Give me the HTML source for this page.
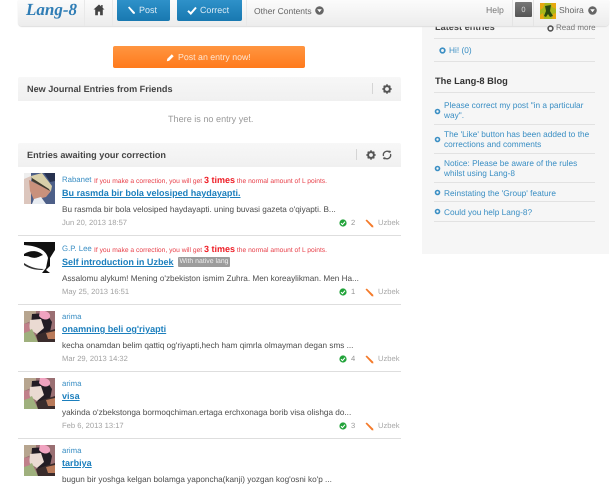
<!DOCTYPE html>
<html><head><meta charset="utf-8">
<style>
html,body{margin:0;padding:0;background:#fff;width:615px;height:486px;overflow:hidden;font-family:"Liberation Sans",sans-serif;text-rendering:geometricPrecision}
#w{position:absolute;left:0;top:0;width:615px;height:486px;overflow:hidden;filter:blur(.3px)}
.a{position:absolute;white-space:nowrap;line-height:12px}
.box{position:absolute}
.sep{position:absolute;height:1px;background:#e2e2e2}
.name{color:#3b8fc4;font-size:7.8px;left:62px;margin-top:1px}
.note{color:#e8404a;font-size:6.7px;left:94px;margin-top:1px}
.times{color:#ee1c25;font-weight:bold;font-size:9px}
.title{color:#1c7fbd;font-weight:bold;font-size:9.05px;left:62px;text-decoration:underline;margin-top:1px}
.body{color:#4c4c4c;font-size:8.2px;left:62px;margin-top:1px}
.date{color:#a3a3a3;font-size:7.6px;left:62px;margin-top:1px}
.num{color:#999;font-size:7.6px;left:351px}
.lang{color:#a8a8a8;font-size:7.6px;left:378px}
.side{color:#3b8fc4;font-size:8.3px;line-height:10px}
svg{position:absolute;display:block}
</style></head><body><div id="w">
<!-- sidebar -->
<div class="box" style="left:422px;top:0;width:187px;height:254px;background:#f6f6f6"></div>
<div class="a" style="left:435px;top:21px;color:#444;font-weight:bold;font-size:9.2px">Latest entries</div>
<!-- header -->
<div class="box" style="left:18px;top:0;width:591px;height:26px;background:linear-gradient(#fbfbfb,#ececec);border-radius:0 0 4px 4px;box-shadow:0 1px 1px #ddd"></div>
<div class="a" style="left:26px;top:1px;font:italic bold 17px/18px 'Liberation Serif',serif;color:#2f7db5">Lang-8</div>
<div class="box" style="left:84px;top:0;width:1px;height:26px;background:#e9e9e9"></div>
<div class="box" style="left:112px;top:0;width:1px;height:26px;background:#e9e9e9"></div>
<svg style="left:93px;top:4px" width="12" height="12" viewBox="0 0 12 12"><path d="M6 0.5L0.5 5.5H2.2V11.2H4.9V7.6H7.1V11.2H9.8V5.5H11.5L9.6 3.8V1H8.2V2.5Z" fill="#444"/></svg>
<div class="box" style="left:117px;top:0;width:53px;height:21px;background:linear-gradient(#2e91c9,#1878b0);border-radius:0 0 2px 2px"></div>
<svg style="left:127px;top:6px" width="9" height="9" viewBox="0 0 9 9"><path d="M1 1.5L2.3 0.5L8 6.5L7.5 8L6 7.6Z" fill="#fff"/></svg>
<div class="a" style="left:139px;top:4px;color:#dcebf5;font-size:9px">Post</div>
<div class="box" style="left:177px;top:0;width:65px;height:21px;background:linear-gradient(#2e91c9,#1878b0);border-radius:0 0 2px 2px"></div>
<svg style="left:187px;top:6px" width="10" height="9" viewBox="0 0 10 9"><path d="M1 4.8L3.8 7.5L9 1.5" fill="none" stroke="#fff" stroke-width="2"/></svg>
<div class="a" style="left:200px;top:4px;color:#dcebf5;font-size:8.9px">Correct</div>
<div class="box" style="left:246px;top:0;width:1px;height:26px;background:#e9e9e9"></div>
<div class="a" style="left:254px;top:5px;color:#666;font-size:8.5px">Other Contents</div>
<svg style="left:315px;top:6px" width="9" height="9" viewBox="0 0 9 9"><circle cx="4.5" cy="4.5" r="4.3" fill="#666"/><path d="M2.2 3.2H6.8L4.5 6.2Z" fill="#fff"/></svg>
<div class="a" style="left:486px;top:4px;color:#777;font-size:8.7px">Help</div>
<div class="box" style="left:512px;top:0;width:1px;height:26px;background:#e4e4e4"></div>
<div class="box" style="left:515px;top:2px;width:17px;height:15px;background:linear-gradient(#777,#555);border-radius:1px;color:#ddd;font-size:7.5px;line-height:15px;text-align:center">0</div>
<div class="box" style="left:533px;top:0;width:1px;height:26px;background:#e4e4e4"></div>
<svg style="left:540px;top:3px" width="16" height="16" viewBox="0 0 16 16"><rect width="16" height="16" fill="#a9b81a"/><path d="M0 0H5L3 5L0 7ZM11 0H16V6L12 4ZM0 12L3 10L4 16H0ZM13 11L16 10V16H12Z" fill="#e8a80f"/><path d="M5 3L11 2L10 8L13 13L10 14L8 11L6 14L4 13L6 8Z" fill="#2b4a10"/></svg>
<div class="a" style="left:559px;top:4px;color:#666;font-size:8.6px">Shoira</div>
<svg style="left:588px;top:6px" width="9" height="9" viewBox="0 0 9 9"><circle cx="4.5" cy="4.5" r="4.3" fill="#666"/><path d="M2.2 3.2H6.8L4.5 6.2Z" fill="#fff"/></svg>

<!-- sidebar content -->
<svg style="left:547px;top:25px" width="7" height="7" viewBox="0 0 7 7"><circle cx="3.5" cy="3.5" r="2.4" fill="none" stroke="#555" stroke-width="1.6"/></svg>
<div class="a" style="left:556px;top:22px;color:#777;font-size:8px">Read more</div>
<div class="sep" style="left:434px;top:38px;width:161px"></div>
<svg style="left:439px;top:47px" width="7" height="7" viewBox="0 0 7 7"><circle cx="3.5" cy="3.5" r="2.3" fill="none" stroke="#3b8fc4" stroke-width="1.7"/></svg>
<div class="a side" style="left:449px;top:45px">Hi! (0)</div>
<div class="sep" style="left:434px;top:61px;width:161px"></div>
<div class="a" style="left:435px;top:75px;color:#333;font-weight:bold;font-size:9.3px">The Lang-8 Blog</div>
<div class="sep" style="left:434px;top:92px;width:161px"></div>
<div class="a side" style="left:444px;top:100px">Please correct my post "in a particular<br>way".</div>
<div class="sep" style="left:434px;top:124px;width:161px"></div>
<div class="a side" style="left:444px;top:129px">The 'Like' button has been added to the<br>corrections and comments</div>
<div class="sep" style="left:434px;top:153px;width:161px"></div>
<div class="a side" style="left:444px;top:158px">Notice: Please be aware of the rules<br>whilst using Lang-8</div>
<div class="sep" style="left:434px;top:182px;width:161px"></div>
<div class="a side" style="left:444px;top:188px">Reinstating the 'Group' feature</div>
<div class="sep" style="left:434px;top:201px;width:161px"></div>
<div class="a side" style="left:444px;top:207px">Could you help Lang-8?</div>
<div class="sep" style="left:434px;top:221px;width:161px"></div>
<svg style="left:434px;top:108px" width="7" height="7" viewBox="0 0 7 7"><circle cx="3.5" cy="3.5" r="2" fill="none" stroke="#3b8fc4" stroke-width="1.6"/></svg>
<svg style="left:434px;top:136px" width="7" height="7" viewBox="0 0 7 7"><circle cx="3.5" cy="3.5" r="2" fill="none" stroke="#3b8fc4" stroke-width="1.6"/></svg>
<svg style="left:434px;top:165px" width="7" height="7" viewBox="0 0 7 7"><circle cx="3.5" cy="3.5" r="2" fill="none" stroke="#3b8fc4" stroke-width="1.6"/></svg>
<svg style="left:434px;top:189px" width="7" height="7" viewBox="0 0 7 7"><circle cx="3.5" cy="3.5" r="2" fill="none" stroke="#3b8fc4" stroke-width="1.6"/></svg>
<svg style="left:434px;top:208px" width="7" height="7" viewBox="0 0 7 7"><circle cx="3.5" cy="3.5" r="2" fill="none" stroke="#3b8fc4" stroke-width="1.6"/></svg>

<!-- CTA -->
<div class="box" style="left:113px;top:46px;width:192px;height:22px;background:linear-gradient(#ff9540,#ff7a1c);border-radius:2px"></div>
<svg style="left:166px;top:53px" width="9" height="9" viewBox="0 0 9 9"><path d="M0.8 8.2L1.3 5.8L5.8 1.3L7.7 3.2L3.2 7.7Z" fill="#fff"/></svg>
<div class="a" style="left:178px;top:51px;color:#fde6d2;font-size:8.8px">Post an entry now!</div>

<!-- friends -->
<div class="box" style="left:18px;top:77px;width:383px;height:24px;background:linear-gradient(#f7f7f7,#f0f0f0);border-radius:2px 2px 0 0"></div>
<div class="a" style="left:27px;top:83px;color:#444;font-weight:bold;font-size:9.1px">New Journal Entries from Friends</div>
<div class="box" style="left:372px;top:83px;width:1px;height:11px;background:#d5d5d5"></div>
<svg style="left:382px;top:84px" width="10" height="10" viewBox="0 0 10 10"><circle cx="5" cy="5" r="2.9" fill="none" stroke="#555" stroke-width="2"/><path d="M5 0.3V2M5 8V9.7M0.3 5H2M8 5H9.7M1.7 1.7L2.9 2.9M7.1 7.1L8.3 8.3M8.3 1.7L7.1 2.9M2.9 7.1L1.7 8.3" stroke="#555" stroke-width="1.5"/></svg>
<div class="a" style="left:168px;top:113px;color:#999;font-size:9.1px">There is no entry yet.</div>

<!-- awaiting -->
<div class="box" style="left:18px;top:143px;width:383px;height:24px;background:linear-gradient(#f7f7f7,#f0f0f0);border-radius:2px 2px 0 0"></div>
<div class="a" style="left:27px;top:149px;color:#444;font-weight:bold;font-size:9.1px">Entries awaiting your correction</div>
<div class="box" style="left:356px;top:149px;width:1px;height:11px;background:#d5d5d5"></div>
<svg style="left:366px;top:150px" width="10" height="10" viewBox="0 0 10 10"><circle cx="5" cy="5" r="2.9" fill="none" stroke="#555" stroke-width="2"/><path d="M5 0.3V2M5 8V9.7M0.3 5H2M8 5H9.7M1.7 1.7L2.9 2.9M7.1 7.1L8.3 8.3M8.3 1.7L7.1 2.9M2.9 7.1L1.7 8.3" stroke="#555" stroke-width="1.5"/></svg>
<svg style="left:382px;top:150px" width="10" height="10" viewBox="0 0 10 10"><path d="M1.5 6A3.7 3.7 0 0 1 7.5 2.2M8.5 4A3.7 3.7 0 0 1 2.5 7.8" fill="none" stroke="#555" stroke-width="1.3"/><path d="M6.5 0.5L9 1L8 3.5ZM3.5 9.5L1 9L2 6.5Z" fill="#555"/></svg>

<!-- item 1 -->
<svg style="left:24px;top:173px" width="31" height="31" viewBox="0 0 31 31"><rect width="31" height="31" fill="#4d5f88"/><rect width="7" height="31" fill="#dcc6bd"/><path d="M5 7L27 18L22 24L10 27L6 18Z" fill="#c9917c"/><path d="M7 3L18 0L28 13L27 18L8 8Z" fill="#d8cfa9"/><path d="M8 5L25 16L26 18L8 8Z" fill="#3f3a2e"/><path d="M10 26L17 24L22 31H8Z" fill="#e9edf2"/><path d="M0 0H7V3L0 6Z" fill="#eee"/><path d="M20 0H31V8L26 9Z" fill="#28324f"/></svg>
<div class="a name" style="top:173px">Rabanet</div>
<div class="a note" style="top:173px">If you make a correction, you will get <span class="times">3 times</span> the normal amount of L points.</div>
<div class="a title" style="top:186px">Bu rasmda bir bola velosiped haydayapti.</div>
<div class="a body" style="top:203px">Bu rasmda bir bola velosiped haydayapti. uning buvasi gazeta o'qiyapti. B...</div>
<div class="a date" style="top:216px">Jun 20, 2013 18:57</div>
<svg style="left:339px;top:219px" width="8" height="8" viewBox="0 0 8 8"><circle cx="4" cy="4" r="3.6" fill="#22a33a"/><path d="M2 4.2L3.5 5.6L6 2.7" fill="none" stroke="#fff" stroke-width="1.1"/></svg>
<div class="a num" style="top:217px">2</div>
<svg style="left:365px;top:219px" width="9" height="9" viewBox="0 0 9 9"><path d="M0.5 1.5L1.8 0.5L8.2 6.8L8.4 8.4L6.8 8.2Z" fill="#f47a2a"/></svg>
<div class="a lang" style="top:217px">Uzbek</div>
<div class="sep" style="left:18px;top:235px;width:383px;background:#dedede"></div>

<!-- item 2 -->
<svg style="left:24px;top:242px" width="31" height="31" viewBox="0 0 31 31"><rect width="31" height="31" fill="#fff"/><path d="M0 0H31V8L26 16V24L22 28L26 31H18L22 26L24 16C22 8 14 4 0 3Z" fill="#111"/><path d="M0 12C6 8 14 8 19 13C14 15 12 17 6 15C4 14 2 14 0 14Z" fill="#111"/><path d="M0 21C6 25 12 27 20 27L18 28C10 28 4 26 0 23Z" fill="#333"/></svg>
<div class="a name" style="top:242px">G.P. Lee</div>
<div class="a note" style="top:242px">If you make a correction, you will get <span class="times">3 times</span> the normal amount of L points.</div>
<div class="a title" style="top:255px">Self introduction in Uzbek</div>
<div class="box" style="left:178px;top:257px;width:52px;height:10px;background:#9c9c9c;border-radius:1px;color:#eee;font-size:6.9px;line-height:10px;text-align:center;white-space:nowrap">With native lang</div>
<div class="a body" style="top:272px">Assalomu alykum! Mening o'zbekiston ismim Zuhra. Men koreaylikman. Men Ha...</div>
<div class="a date" style="top:285px">May 25, 2013 16:51</div>
<svg style="left:339px;top:288px" width="8" height="8" viewBox="0 0 8 8"><circle cx="4" cy="4" r="3.6" fill="#22a33a"/><path d="M2 4.2L3.5 5.6L6 2.7" fill="none" stroke="#fff" stroke-width="1.1"/></svg>
<div class="a num" style="top:286px">1</div>
<svg style="left:365px;top:288px" width="9" height="9" viewBox="0 0 9 9"><path d="M0.5 1.5L1.8 0.5L8.2 6.8L8.4 8.4L6.8 8.2Z" fill="#f47a2a"/></svg>
<div class="a lang" style="top:286px">Uzbek</div>
<div class="sep" style="left:18px;top:304px;width:383px;background:#dedede"></div>

<!-- item 3 -->
<svg style="left:24px;top:311px" width="31" height="31" viewBox="0 0 31 31"><rect width="31" height="31" fill="#9a6f72"/><path d="M0 0H12V8L0 13Z" fill="#b7a58f"/><path d="M8 3L22 2L28 11L26 21L14 24L7 15Z" fill="#221c24"/><path d="M16 0C22 -1 27 2 26 6C24 10 18 9 15 5Z" fill="#f0a3c0"/><path d="M6 9L17 8L20 17L13 23L5 18Z" fill="#eadad2"/><path d="M0 22L8 18L14 31H0Z" fill="#9fb07d"/><path d="M12 24L31 18V31H14Z" fill="#3a2c2c"/><path d="M22 22L31 20V28L24 28Z" fill="#b97a5a"/><path d="M0 13L5 12L6 20L0 22Z" fill="#c0808a"/></svg>
<div class="a name" style="top:310px">arima</div>
<div class="a title" style="top:322px">onamning beli og'riyapti</div>
<div class="a body" style="top:339px">kecha onamdan belim qattiq og'riyapti,hech ham qimrla olmayman degan sms ...</div>
<div class="a date" style="top:352px">Mar 29, 2013 14:32</div>
<svg style="left:339px;top:355px" width="8" height="8" viewBox="0 0 8 8"><circle cx="4" cy="4" r="3.6" fill="#22a33a"/><path d="M2 4.2L3.5 5.6L6 2.7" fill="none" stroke="#fff" stroke-width="1.1"/></svg>
<div class="a num" style="top:353px">4</div>
<svg style="left:365px;top:355px" width="9" height="9" viewBox="0 0 9 9"><path d="M0.5 1.5L1.8 0.5L8.2 6.8L8.4 8.4L6.8 8.2Z" fill="#f47a2a"/></svg>
<div class="a lang" style="top:353px">Uzbek</div>
<div class="sep" style="left:18px;top:371px;width:383px;background:#dedede"></div>

<!-- item 4 -->
<svg style="left:24px;top:378px" width="31" height="31" viewBox="0 0 31 31"><rect width="31" height="31" fill="#9a6f72"/><path d="M0 0H12V8L0 13Z" fill="#b7a58f"/><path d="M8 3L22 2L28 11L26 21L14 24L7 15Z" fill="#221c24"/><path d="M16 0C22 -1 27 2 26 6C24 10 18 9 15 5Z" fill="#f0a3c0"/><path d="M6 9L17 8L20 17L13 23L5 18Z" fill="#eadad2"/><path d="M0 22L8 18L14 31H0Z" fill="#9fb07d"/><path d="M12 24L31 18V31H14Z" fill="#3a2c2c"/><path d="M22 22L31 20V28L24 28Z" fill="#b97a5a"/><path d="M0 13L5 12L6 20L0 22Z" fill="#c0808a"/></svg>
<div class="a name" style="top:377px">arima</div>
<div class="a title" style="top:389px">visa</div>
<div class="a body" style="top:406px">yakinda o'zbekstonga bormoqchiman.ertaga erchxonaga borib visa olishga do...</div>
<div class="a date" style="top:419px">Feb 6, 2013 13:17</div>
<svg style="left:339px;top:422px" width="8" height="8" viewBox="0 0 8 8"><circle cx="4" cy="4" r="3.6" fill="#22a33a"/><path d="M2 4.2L3.5 5.6L6 2.7" fill="none" stroke="#fff" stroke-width="1.1"/></svg>
<div class="a num" style="top:420px">3</div>
<svg style="left:365px;top:422px" width="9" height="9" viewBox="0 0 9 9"><path d="M0.5 1.5L1.8 0.5L8.2 6.8L8.4 8.4L6.8 8.2Z" fill="#f47a2a"/></svg>
<div class="a lang" style="top:420px">Uzbek</div>
<div class="sep" style="left:18px;top:438px;width:383px;background:#dedede"></div>

<!-- item 5 -->
<svg style="left:24px;top:445px" width="31" height="31" viewBox="0 0 31 31"><rect width="31" height="31" fill="#9a6f72"/><path d="M0 0H12V8L0 13Z" fill="#b7a58f"/><path d="M8 3L22 2L28 11L26 21L14 24L7 15Z" fill="#221c24"/><path d="M16 0C22 -1 27 2 26 6C24 10 18 9 15 5Z" fill="#f0a3c0"/><path d="M6 9L17 8L20 17L13 23L5 18Z" fill="#eadad2"/><path d="M0 22L8 18L14 31H0Z" fill="#9fb07d"/><path d="M12 24L31 18V31H14Z" fill="#3a2c2c"/><path d="M22 22L31 20V28L24 28Z" fill="#b97a5a"/><path d="M0 13L5 12L6 20L0 22Z" fill="#c0808a"/></svg>
<div class="a name" style="top:444px">arima</div>
<div class="a title" style="top:456px">tarbiya</div>
<div class="a body" style="top:473px">bugun bir yoshga kelgan bolamga yaponcha(kanji) yozgan kog'osni ko'p ...</div>
</div></body></html>
